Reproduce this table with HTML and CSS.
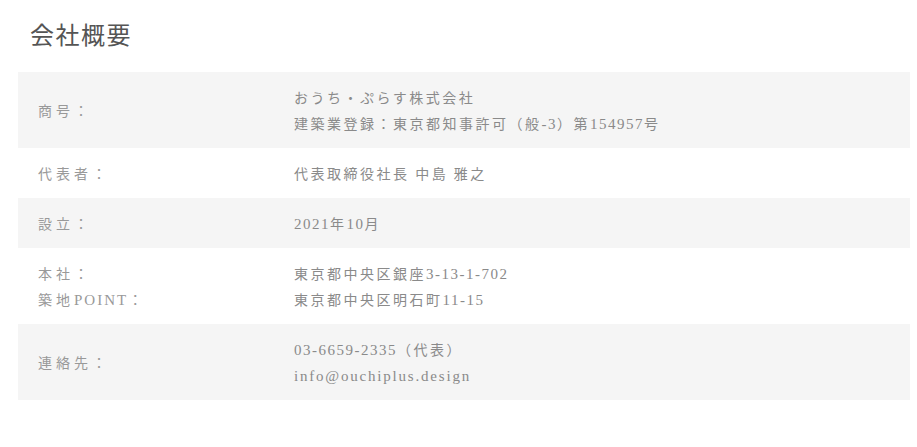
FILE: index.html
```html
<!DOCTYPE html>
<html lang="ja">
<head>
<meta charset="utf-8">
<link rel="stylesheet" href="styles.css">
</head>
<body>
<section class="overview">
  <h2 class="title">会社概要</h2>
  <dl class="table">
    <div class="row shade">
      <dt>商号：</dt>
      <dd>おうち・ぷらす株式会社<br>建築業登録：東京都知事許可（般<span class="lat">-3</span>）第<span class="lat">154957</span>号</dd>
    </div>
    <div class="row">
      <dt>代表者：</dt>
      <dd>代表取締役社長 中島 雅之</dd>
    </div>
    <div class="row shade">
      <dt>設立：</dt>
      <dd><span class="lat">2021</span>年<span class="lat">10</span>月</dd>
    </div>
    <div class="row">
      <dt>本社：<br>築地<span class="lat">POINT</span>：</dt>
      <dd>東京都中央区銀座<span class="lat">3-13-1-702</span><br>東京都中央区明石町<span class="lat">11-15</span></dd>
    </div>
    <div class="row shade">
      <dt>連絡先：</dt>
      <dd><span class="lat">03-6659-2335</span>（代表）<br><span class="lat mail">info@ouchiplus.design</span></dd>
    </div>
  </dl>
</section>
</body>
</html>
```
FILE: styles.css
```css
html, body { margin: 0; padding: 0; background: #fff; }
body {
  font-family: "Noto Sans CJK JP", sans-serif;
  width: 917px;
  height: 447px;
  overflow: hidden;
}
.overview { padding: 18px 7px 0 18px; }
.title {
  margin: 0 0 22px 12px;
  font-weight: 400;
  font-size: 24px;
  line-height: 32px;
  letter-spacing: 1.5px;
  color: #555;
}
.table { margin: 0; }
.row {
  display: flex;
  align-items: center;
  padding: 12px 0 12px;
}
.row.shade { background: #f5f5f5; }
.row dt {
  width: 256px;
  padding-left: 20px;
  font-size: 14px;
  line-height: 26px;
  letter-spacing: 4px;
  color: #999;
}
.row dd {
  margin: 0;
  font-size: 14px;
  line-height: 26px;
  letter-spacing: 2.5px;
  color: #8a8a8a;
}
.lat {
  font-family: "Liberation Serif", serif;
  font-size: 15px;
  line-height: 1;
  letter-spacing: 1.5px;
}
.lat.mail { letter-spacing: 1.8px; }
.row dt .lat { letter-spacing: 2px; }
```
